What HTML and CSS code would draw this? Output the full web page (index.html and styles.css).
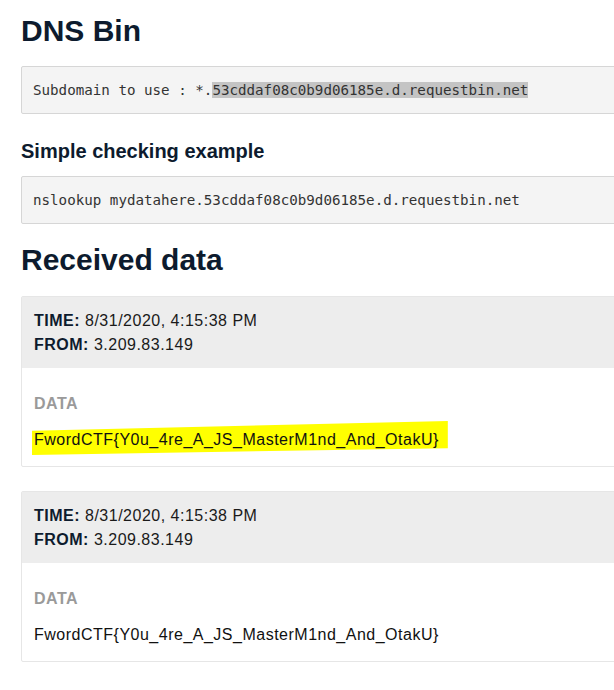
FILE: index.html
```html
<!DOCTYPE html>
<html>
<head>
<meta charset="utf-8">
<title>DNS Bin</title>
<link rel="stylesheet" href="styles.css">
</head>
<body>
<main class="page">
  <h1 class="title">DNS Bin</h1>
  <pre class="code code-first">Subdomain to use : *.<span class="sel">53cddaf08c0b9d06185e.d.requestbin.net</span></pre>
  <h3 class="subtitle">Simple checking example</h3>
  <pre class="code">nslookup mydatahere.53cddaf08c0b9d06185e.d.requestbin.net</pre>
  <h2 class="title title-received">Received data</h2>

  <section class="card">
    <div class="card-head">
      <div><b>TIME:</b> 8/31/2020, 4:15:38 PM</div>
      <div><b>FROM:</b> 3.209.83.149</div>
    </div>
    <div class="card-body">
      <div class="label">DATA</div>
      <div class="value"><span class="marker">FwordCTF{Y0u_4re_A_JS_MasterM1nd_And_OtakU}</span></div>
    </div>
  </section>

  <section class="card">
    <div class="card-head">
      <div><b>TIME:</b> 8/31/2020, 4:15:38 PM</div>
      <div><b>FROM:</b> 3.209.83.149</div>
    </div>
    <div class="card-body">
      <div class="label">DATA</div>
      <div class="value">FwordCTF{Y0u_4re_A_JS_MasterM1nd_And_OtakU}</div>
    </div>
  </section>
</main>
</body>
</html>
```

FILE: styles.css
```css
html, body {
  margin: 0;
  padding: 0;
  background: #ffffff;
  overflow: hidden;
}

body {
  font-family: "Liberation Sans", Arial, sans-serif;
  font-size: 16px;
  color: #111;
}

.page {
  width: 700px;
  padding: 14px 0 0 21px;
  display: flex;
  flex-direction: column;
}

.title {
  font-size: 30px;
  line-height: 33px;
  font-weight: bold;
  color: #0d1b2e;
  margin: 0 0 19px;
}

.title-received {
  margin: 19px 0 20px;
}

.subtitle {
  font-size: 20px;
  line-height: 22px;
  font-weight: bold;
  color: #0d1b2e;
  margin: 26px 0 14px;
}

.code {
  margin: 0;
  background: #f4f4f4;
  border: 1px solid #d6d6d6;
  border-radius: 2px;
  padding: 11px 11px;
  font-family: "DejaVu Sans Mono", "Liberation Mono", monospace;
  font-size: 14.2px;
  line-height: 24px;
  color: #333;
}

.sel {
  background: #c4c4c4;
}

.card {
  border: 1px solid #e6e6e6;
  border-radius: 2px;
  margin-bottom: 24px;
}

.card-head {
  background: #ededed;
  padding: 12px 12px 11px;
  line-height: 24px;
  color: #1a1a1a;
  letter-spacing: 0.5px;
}

.card-head b {
  color: #0d1b2e;
}

.card-body {
  padding: 24px 12px 14px;
  line-height: 24px;
  letter-spacing: 0.5px;
}

.label {
  font-weight: bold;
  color: #9a9a9a;
  margin-bottom: 12px;
}

.value {
  color: #111;
}

.marker {
  background: #ffff00;
  padding: 10px 9px 7px 2px;
  margin-left: -2px;
  clip-path: polygon(0 29%, 100% 0, 100% 80%, 0 100%);
}
```
